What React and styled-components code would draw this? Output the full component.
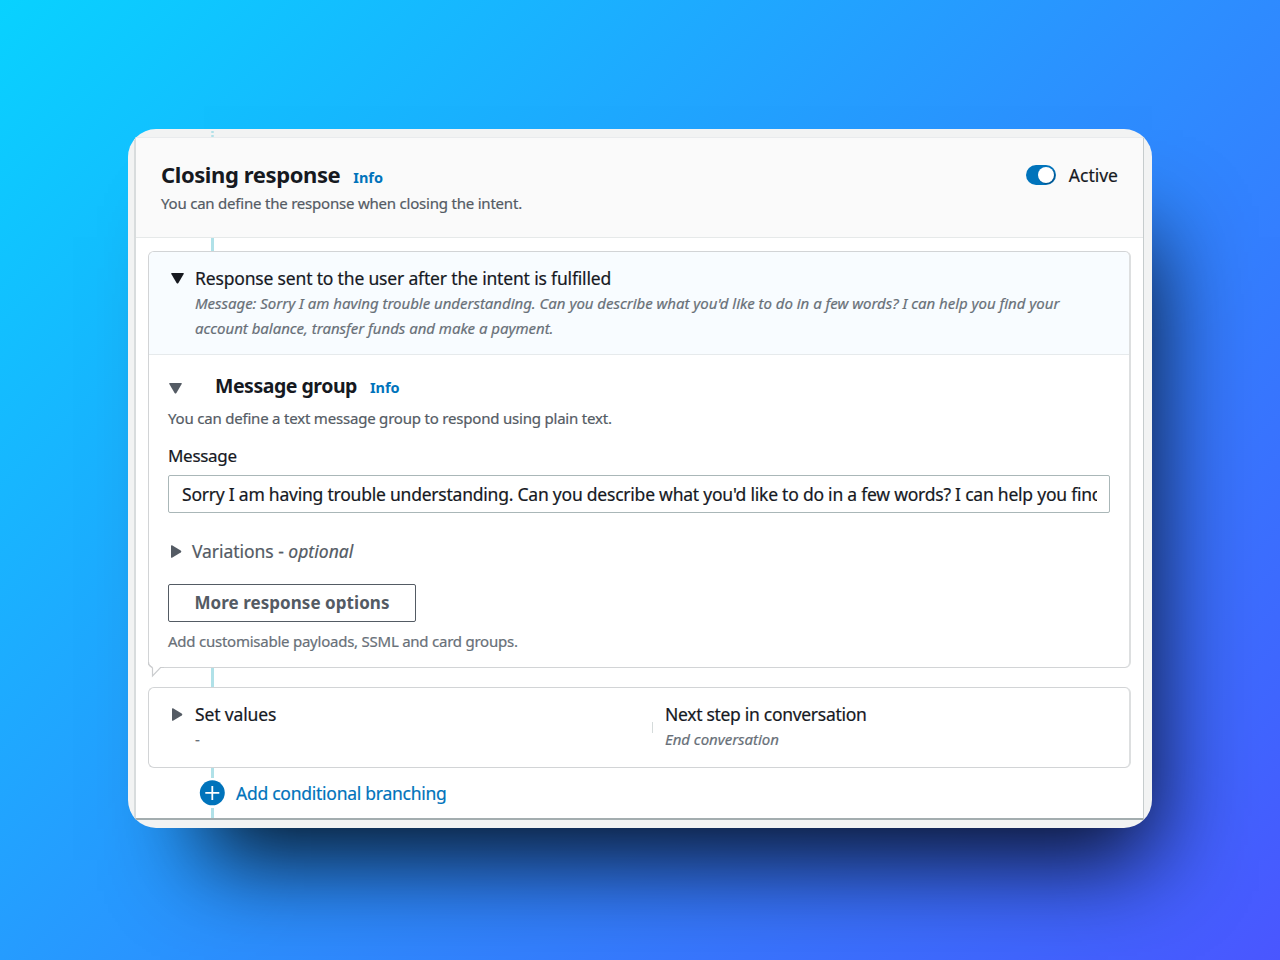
import React from "react";
import styled, { createGlobalStyle } from "styled-components";

const Global = createGlobalStyle`
  * { box-sizing: border-box; }
  body {
    margin: 0;
    font-family: "Noto Sans", "Open Sans", sans-serif;
    color: #16191f;
  }
  h2, h3, p { margin: 0; }
`;

const Stage = styled.main`
  width: 1280px;
  height: 960px;
  padding: 129px 128px 132px;
  overflow: hidden;
  background: linear-gradient(135deg, #08d2ff 0%, #2a93ff 50%, #4066ff 88%, #4a56ff 100%);
`;

const Frame = styled.section`
  display: flex;
  flex-direction: column;
  width: 1024px;
  height: 699px;
  padding: 0 8px 8px 6px;
  border-radius: 28px;
  overflow: hidden;
  background: #f2f3f3;
  box-shadow: 38px 70px 88px -38px rgba(0, 0, 0, 0.86);
`;

const TopStrip = styled.div`
  display: flex;
  flex-direction: column;
  gap: 2px;
  height: 8px;
  padding: 2px 0 0 77px;
`;

const Dot = styled.i`
  width: 3px;
  height: 2px;
  border-radius: 1px;
  background: #b0e1e8;
`;

const Panel = styled.div`
  display: flex;
  flex-direction: column;
  height: 683px;
  border: solid;
  border-width: 1px 1px 2px 2px;
  border-color: #e9ebed #c6cccd #a3adaf #d8dcdd;
  background: #fff;
`;

const Header = styled.header`
  display: flex;
  justify-content: space-between;
  height: 100px;
  padding: 20px 25px 0;
  border-bottom: 1px solid #e6e9e9;
  background: #fafafa;
`;

const TitleRow = styled.div`
  display: flex;
  align-items: baseline;
  gap: ${(p) => p.$gap}px;
  height: ${(p) => p.$height}px;
`;

const Title = styled.h2`
  font-size: ${(p) => p.$size || 22}px;
  line-height: 32px;
  font-weight: 700;
  letter-spacing: ${(p) => p.$track}px;
  white-space: nowrap;
`;

const InfoLink = styled.a`
  color: #0073bb;
  font-size: 14.5px;
  font-weight: 700;
  letter-spacing: ${(p) => p.$track || 0}px;
`;

const Label = styled.p`
  color: ${(p) => p.$color || "#16191f"};
  font-size: ${(p) => p.$size || 17.5}px;
  line-height: ${(p) => p.$line || 26}px;
  letter-spacing: ${(p) => p.$track || 0}px;
  font-style: ${(p) => (p.$italic ? "italic" : "normal")};
  margin-top: ${(p) => p.$top || 0}px;
  -webkit-text-stroke: 0.2px currentColor;
  white-space: nowrap;
`;

const Optional = styled.em`
  letter-spacing: ${(p) => p.$track}px;
`;

const Toggle = styled.div`
  display: flex;
  gap: 13px;
  height: 34px;
  align-items: center;
`;

const Track = styled.span`
  display: flex;
  justify-content: flex-end;
  width: 30px;
  height: 20px;
  padding: 2px;
  border-radius: 10px;
  background: #0073bb;
`;

const Knob = styled.span`
  width: 16px;
  height: 16px;
  border-radius: 50%;
  background: #fff;
  box-shadow: 1px 1px 1px rgba(0, 28, 60, 0.4);
`;

const Flow = styled.div`
  display: flex;
  flex-direction: column;
  padding: 0 12px;
`;

const Connector = styled.div`
  width: 3px;
  height: ${(p) => p.$height}px;
  margin-left: 63px;
  background: #b0e1e8;
`;

const Card = styled.article`
  position: relative;
  width: 983px;
  height: ${(p) => p.$height}px;
  border: 1px solid #d2d4d6;
  border-right-width: 2px;
  border-right-color: #dddfe0;
  border-radius: 6px;
  background: #fff;
`;

const Summary = styled.div`
  display: flex;
  height: 103px;
  padding: 13px 21px 0;
  border-bottom: 1px solid #e6eaec;
  border-radius: 5px 5px 0 0;
  background: #f8fcff;
`;

const Arrow = styled.svg`
  flex: none;
  width: 13px;
  height: 13px;
  margin: ${(p) => p.$margin};
  fill: ${(p) => p.$color || "#545b64"};
`;

const Group = styled.div`
  display: flex;
  flex-direction: column;
  align-items: flex-start;
  padding: 15px 19px 0;
`;

const Input = styled.div`
  width: 942px;
  height: 38px;
  margin: 7px 0 25px;
  padding: 5px 12px 0 13px;
  border: 1px solid #aab7b8;
  border-radius: 2px;
`;

const Clip = styled.div`
  overflow: hidden;
`;

const Button = styled.button`
  width: 248px;
  height: 38px;
  margin: 20px 0 7px;
  padding: 0;
  border: 1px solid #545b64;
  border-radius: 2px;
  background: #fff;
  color: #545b64;
  font: 700 17px/36px "Noto Sans", sans-serif;
  letter-spacing: ${(p) => p.$track}px;
`;

const Tail = styled.svg`
  position: absolute;
  left: -1px;
  top: 410px;
  width: 16px;
  height: 18px;
`;

const Row = styled.div`
  display: flex;
`;

const ValuesRow = styled.div`
  display: flex;
  padding: 13px 21px 0;
`;

const Column = styled.div`
  width: ${(p) => p.$width}px;
`;

const Divider = styled.i`
  width: 1px;
  height: 11px;
  margin: 21px 12px 0 0;
  background: #d5dbdb;
`;

const AddRow = styled.div`
  display: flex;
  align-items: center;
  gap: 11px;
  height: 30px;
  padding-left: 51px;
`;

const Down = (props) => (
  <Arrow viewBox="0 0 13 13" {...props}>
    <path d="M.8 1h11.4q.9.1.5 1L7.4 11q-.9 1.2-1.8 0L.3 2q-.4-.9.5-1z" />
  </Arrow>
);

const Right = (props) => (
  <Arrow viewBox="0 0 13 13" {...props}>
    <path d="M1 .8v11.4q.1.9 1 .5l8.700-5.300q1.200-.9 0-1.800L2 .3Q1.100 0 1 .8z" />
  </Arrow>
);

export default function App() {
  return (
    <Stage>
      <Global />
      <Frame>
        <TopStrip>
          <Dot />
          <Dot />
        </TopStrip>
        <Panel>
          <Header>
            <div>
              <TitleRow $gap={13} $height={32}>
                <Title $track={-0.4}>Closing response</Title>
                <InfoLink>Info</InfoLink>
              </TitleRow>
              <Label $size={15} $color="#545b64" $track={-0.21}>
                You can define the response when closing the intent.
              </Label>
            </div>
            <Toggle>
              <Track>
                <Knob />
              </Track>
              <Label>Active</Label>
            </Toggle>
          </Header>
          <Flow>
            <Connector $height={13} />
            <Card $height={417}>
              <Summary>
                <Down $color="#16191f" $margin="7px 11px 0 1px" />
                <div>
                  <Label $track={-0.17}>Response sent to the user after the intent is fulfilled</Label>
                  <Label $size={15} $line={25} $italic $color="#687078" $track={-0.02}>
                    Message: Sorry I am having trouble understanding. Can you describe what you'd
                    like to do in a few words? I can help you find your
                    <br />
                    account balance, transfer funds and make a payment.
                  </Label>
                </div>
              </Summary>
              <Group>
                <Row>
                  <Down $margin="12px 33px 0 1px" />
                  <TitleRow $gap={13} $height={35}>
                    <Title $size={19.5} $track={-0.48}>Message group</Title>
                    <InfoLink>Info</InfoLink>
                  </TitleRow>
                </Row>
                <Label $size={15} $color="#545b64" $track={-0.2}>
                  You can define a text message group to respond using plain text.
                </Label>
                <Label $size={17} $line={24} $track={-0.3} $top={13}>
                  Message
                </Label>
                <Input>
                  <Clip>
                    <Label $track={-0.225}>
                      Sorry I am having trouble understanding. Can you describe what you'd like to
                      do in a few words? I can help you find
                    </Label>
                  </Clip>
                </Input>
                <Row>
                  <Right $margin="7px 9px 0 2px" />
                  <Label $color="#545b64" $track={-0.05}>
                    Variations - <Optional $track={0.05}>optional</Optional>
                  </Label>
                </Row>
                <Button $track={0.05}>More response options</Button>
                <Label $size={15} $line={24} $color="#687078" $track={-0.24}>
                  Add customisable payloads, SSML and card groups.
                </Label>
              </Group>
              <Tail viewBox="0 0 16 18">
                <path d="M0 2H13V5.500L4.500 14V6L0 3z M0 2V7H5V2z M4.500 4H12.500V7H4.500z" fill="#fff" />
                <path
                  d="M.5 0V2Q.6 3.200 4.500 6V14L12.500 5.500H16"
                  fill="none"
                  stroke="#cbcdcf"
                  strokeWidth="1.200"
                />
              </Tail>
            </Card>
            <Connector $height={19} />
            <Card $height={81}>
              <ValuesRow>
                <Right $margin="7px 11px 0 1px" />
                <Column $width={457}>
                  <Label $track={-0.15}>Set values</Label>
                  <Label $size={15} $line={25} $color="#687078">-</Label>
                </Column>
                <Divider />
                <Column $width={300}>
                  <Label $track={-0.3}>Next step in conversation</Label>
                  <Label $size={15} $line={25} $italic $color="#687078" $track={-0.03}>
                    End conversation
                  </Label>
                </Column>
              </ValuesRow>
            </Card>
            <Connector $height={10} />
            <AddRow>
              <svg width="26" height="26" viewBox="0 0 26 26">
                <circle cx="13.300" cy="12.800" r="12.500" fill="#0073bb" />
                <path d="M13.300 6v14M6.300 12.800h14" stroke="#fff" strokeWidth="1.800" />
              </svg>
              <Label $color="#0073bb" $track={-0.26}>Add conditional branching</Label>
            </AddRow>
            <Connector $height={10} />
          </Flow>
        </Panel>
      </Frame>
    </Stage>
  );
}
